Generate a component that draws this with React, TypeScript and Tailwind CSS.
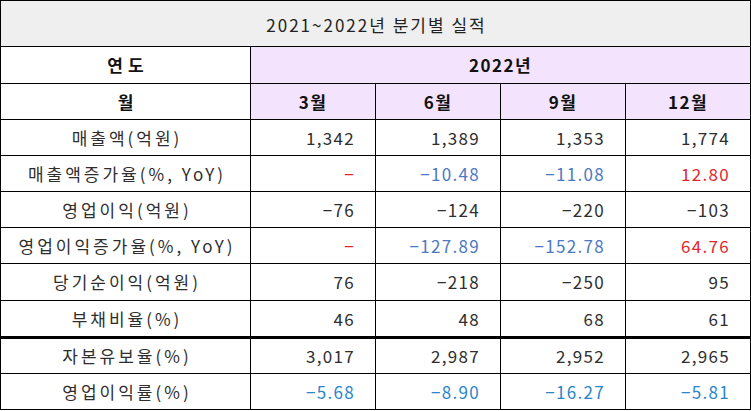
type Tone = 'plain' | 'up' | 'down' | 'ratio';

type Row = {
  label: string;
  values: { v: string; t?: Tone }[];
  h: string;
  thickTop?: boolean;
};

const toneClass: Record<Tone, string> = {
  plain: 'text-[#2e2e2e]',
  up: 'text-[#e3262c]',
  down: 'text-[#4c78c4]',
  ratio: 'text-[#2a86c9]',
};

const rows: Row[] = [
  { label: '매출액(억원)', h: 'h-[36px]', values: [{ v: '1,342' }, { v: '1,389' }, { v: '1,353' }, { v: '1,774' }] },
  {
    label: '매출액증가율(%, YoY)',
    h: 'h-[36px]',
    values: [{ v: '−', t: 'up' }, { v: '−10.48', t: 'down' }, { v: '−11.08', t: 'down' }, { v: '12.80', t: 'up' }],
  },
  { label: '영업이익(억원)', h: 'h-[36px]', values: [{ v: '−76' }, { v: '−124' }, { v: '−220' }, { v: '−103' }] },
  {
    label: '영업이익증가율(%, YoY)',
    h: 'h-[36px]',
    values: [{ v: '−', t: 'up' }, { v: '−127.89', t: 'down' }, { v: '−152.78', t: 'down' }, { v: '64.76', t: 'up' }],
  },
  { label: '당기순이익(억원)', h: 'h-[37px]', values: [{ v: '76' }, { v: '−218' }, { v: '−250' }, { v: '95' }] },
  { label: '부채비율(%)', h: 'h-[37px]', values: [{ v: '46' }, { v: '48' }, { v: '68' }, { v: '61' }] },
  { label: '자본유보율(%)', h: 'h-[36px]', thickTop: true, values: [{ v: '3,017' }, { v: '2,987' }, { v: '2,952' }, { v: '2,965' }] },
  {
    label: '영업이익률(%)',
    h: 'h-[36px]',
    values: [{ v: '−5.68', t: 'ratio' }, { v: '−8.90', t: 'ratio' }, { v: '−16.27', t: 'ratio' }, { v: '−5.81', t: 'ratio' }],
  },
];

const months = ['3월', '6월', '9월', '12월'];

export default function App() {
  return (
    <div className="w-[751px] h-[411px] bg-white font-['Noto_Sans_CJK_KR','Noto_Sans',sans-serif] text-[17px] text-[#2e2e2e]">
      <table className="w-[750px] table-fixed border-collapse">
        <colgroup>
          <col className="w-[250px]" />
          <col className="w-[125px]" />
          <col className="w-[125px]" />
          <col className="w-[125px]" />
          <col className="w-[125px]" />
        </colgroup>
        <tbody>
          <tr className="h-[46px]">
            <td colSpan={5} className="border border-black bg-[#efefef] pt-[3px] pl-[2px] text-center tracking-[2px] text-[#222]">
              2021~2022년 분기별 실적
            </td>
          </tr>
          <tr className="h-[37px]">
            <td className="border border-black pl-[5px] text-center font-bold tracking-[5px] text-[#111]">연도</td>
            <td colSpan={4} className="border border-black bg-[#f3e3fc] text-center font-bold tracking-[1.5px] text-[#111]">
              2022년
            </td>
          </tr>
          <tr className="h-[36px]">
            <td className="border border-black text-center font-bold text-[#111]">월</td>
            {months.map((m) => (
              <td key={m} className="border border-black bg-[#f3e3fc] text-center font-bold tracking-[1.5px] text-[#111]">
                {m}
              </td>
            ))}
          </tr>
          {rows.map((r) => (
            <tr key={r.label} className={r.h}>
              <td
                className={`border border-black pl-[3px] text-center tracking-[3px] ${r.thickTop ? 'border-t-[3px]' : ''}`}
              >
                {r.label}
              </td>
              {r.values.map((c, i) => (
                <td
                  key={i}
                  className={`border border-black pr-[20px] text-right tracking-[1.3px] ${toneClass[c.t ?? 'plain']} ${
                    r.thickTop ? 'border-t-[3px]' : ''
                  }`}
                >
                  {c.v}
                </td>
              ))}
            </tr>
          ))}
        </tbody>
      </table>
    </div>
  );
}
